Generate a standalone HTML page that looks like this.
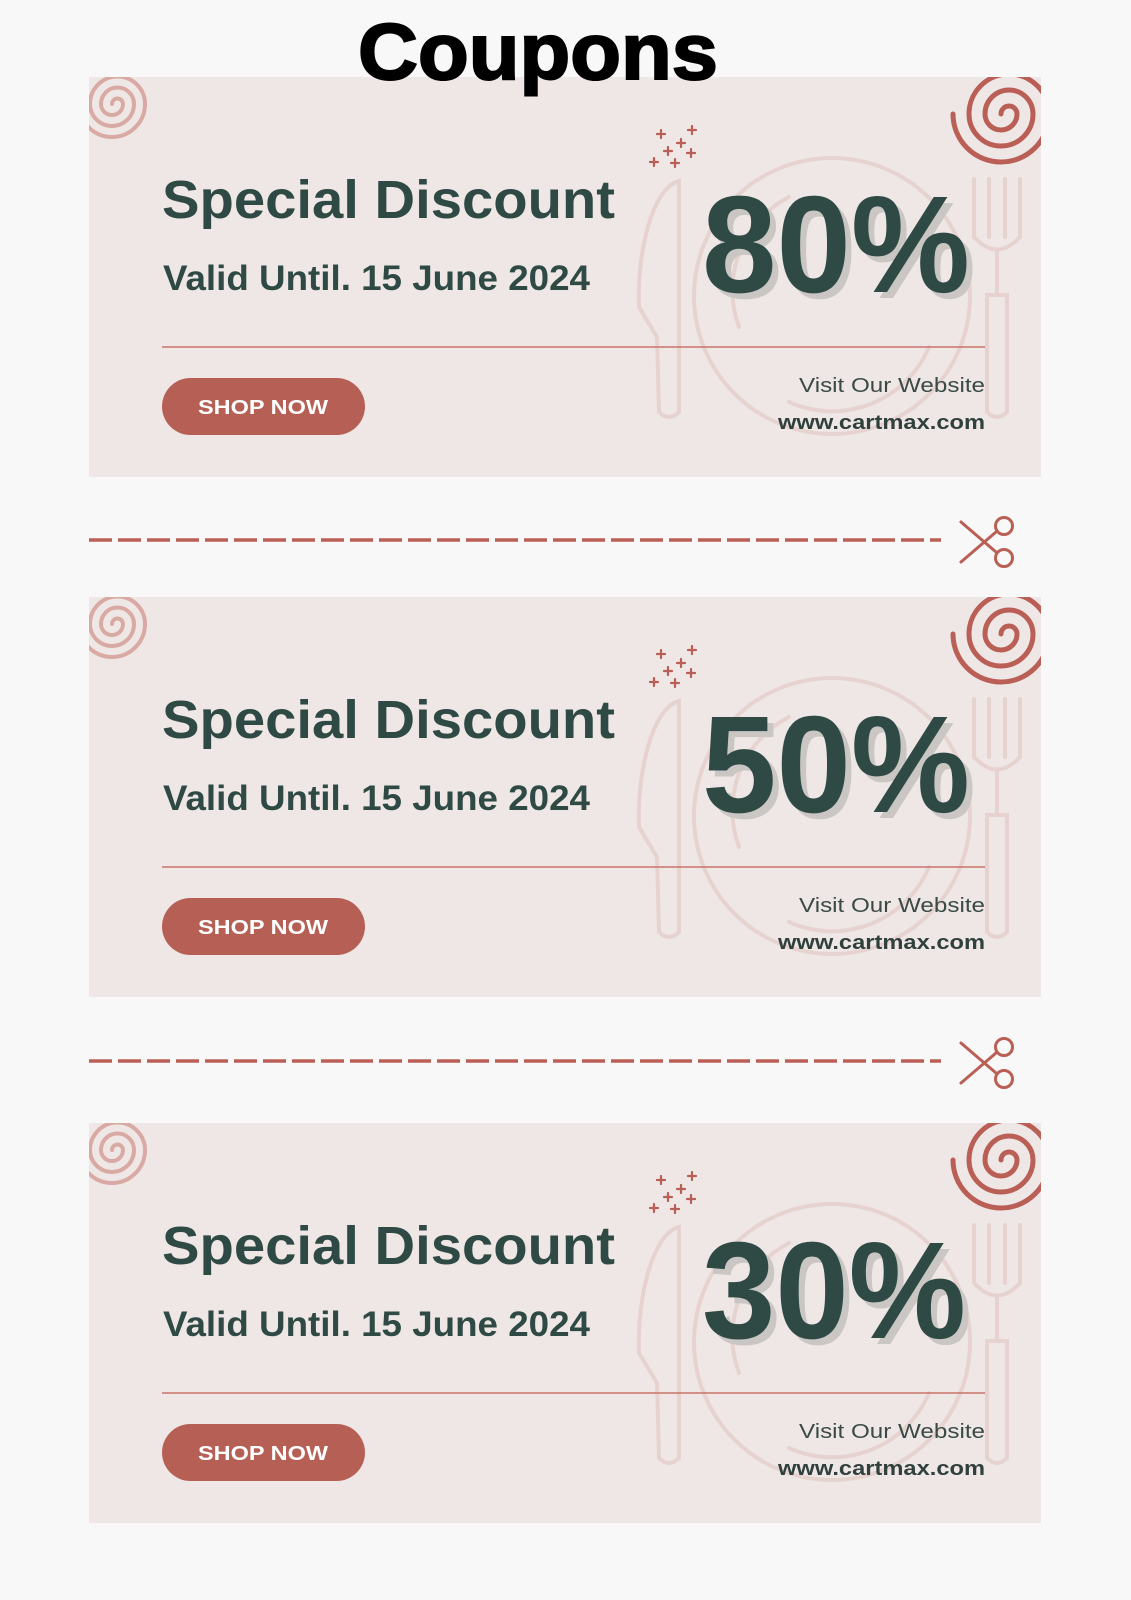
<!DOCTYPE html>
<html><head><meta charset="utf-8"><style>
html,body{margin:0;padding:0;background:#f8f8f8;width:1131px;height:1600px;overflow:hidden;font-family:"Liberation Sans",sans-serif}
.card{position:absolute;left:89px;width:952px;height:400px;background:#efe7e6;overflow:hidden}
.card svg{position:absolute;left:0;top:0}
</style></head><body>

<div class="card" style="top:77px">
<svg width="952" height="400" viewBox="0 0 952 400">
<g fill="none" stroke-linecap="round">
<path d="M23 27 a5.5 5.5 0 0 1 11 0 a11 11 0 0 1 -22 0 a16.5 16.5 0 0 1 33 0 a22 22 0 0 1 -44 0 a27.5 27.5 0 0 1 55 0 a33 33 0 0 1 -66 0" stroke="#d8aaa3" stroke-width="4"/>
<path d="M912 37 a8 8 0 0 1 16 0 a16 16 0 0 1 -32 0 a24 24 0 0 1 48 0 a32 32 0 0 1 -64 0 a40 40 0 0 1 80 0 a48 48 0 0 1 -96 0" stroke="#b95f55" stroke-width="5"/>
<circle cx="743" cy="219" r="138" stroke="#e6d3d0" stroke-width="4"/>
<path d="M650 250 A105 105 0 0 1 700 120" stroke="#e6d3d0" stroke-width="4"/>
<path d="M700 325 A105 105 0 0 0 840 270" stroke="#e6d3d0" stroke-width="4"/>
<path d="M590 104 C565 110 548 170 550 230 L568 260 L570 335 Q580 345 590 335 Z" stroke="#e6d3d0" stroke-width="4"/>
<path d="M885 102 L885 160 Q908 185 931 160 L931 102 M900 102 L900 160 M916 102 L916 160 M908 175 L908 218 M898 218 L918 218 L918 335 Q908 345 898 335 Z" stroke="#e6d3d0" stroke-width="4"/>
<g stroke="#b95f55" stroke-width="2.2">
<path d="M568 57h8M572 53v8 M599 53h8M603 49v8 M588 66h8M592 62v8 M575 74h8M579 70v8 M598 76h8M602 72v8 M561 85h8M565 81v8 M582 86h8M586 82v8"/>
</g>
</g>
<text x="73" y="141" font-family="Liberation Sans" font-weight="bold" font-size="54" textLength="453" lengthAdjust="spacingAndGlyphs" fill="#2f4a44">Special Discount</text>
<text x="74" y="213" font-family="Liberation Sans" font-weight="bold" font-size="35" textLength="427" lengthAdjust="spacingAndGlyphs" fill="#2f4a44">Valid Until. 15 June 2024</text>
<text x="619" y="221" font-family="Liberation Sans" font-weight="bold" font-size="138" textLength="268" lengthAdjust="spacingAndGlyphs" fill="#c9c6c3">80%</text>
<text x="613" y="215" font-family="Liberation Sans" font-weight="bold" font-size="138" textLength="268" lengthAdjust="spacingAndGlyphs" fill="#2f4a44">80%</text>
<line x1="73" y1="270" x2="896" y2="270" stroke="#c97468" stroke-width="1.5"/>
<rect x="73" y="301" width="203" height="57" rx="28.5" fill="#b55f55"/>
<text x="109" y="337" font-family="Liberation Sans" font-weight="bold" font-size="20" textLength="130" lengthAdjust="spacingAndGlyphs" fill="#fff">SHOP NOW</text>
<text x="710" y="315" font-family="Liberation Sans" font-size="20" textLength="186" lengthAdjust="spacingAndGlyphs" fill="#3a4a47">Visit Our Website</text>
<text x="689" y="352" font-family="Liberation Sans" font-weight="bold" font-size="20" textLength="207" lengthAdjust="spacingAndGlyphs" fill="#2f403d">www.cartmax.com</text>
</svg></div>

<div class="card" style="top:597px">
<svg width="952" height="400" viewBox="0 0 952 400">
<g fill="none" stroke-linecap="round">
<path d="M23 27 a5.5 5.5 0 0 1 11 0 a11 11 0 0 1 -22 0 a16.5 16.5 0 0 1 33 0 a22 22 0 0 1 -44 0 a27.5 27.5 0 0 1 55 0 a33 33 0 0 1 -66 0" stroke="#d8aaa3" stroke-width="4"/>
<path d="M912 37 a8 8 0 0 1 16 0 a16 16 0 0 1 -32 0 a24 24 0 0 1 48 0 a32 32 0 0 1 -64 0 a40 40 0 0 1 80 0 a48 48 0 0 1 -96 0" stroke="#b95f55" stroke-width="5"/>
<circle cx="743" cy="219" r="138" stroke="#e6d3d0" stroke-width="4"/>
<path d="M650 250 A105 105 0 0 1 700 120" stroke="#e6d3d0" stroke-width="4"/>
<path d="M700 325 A105 105 0 0 0 840 270" stroke="#e6d3d0" stroke-width="4"/>
<path d="M590 104 C565 110 548 170 550 230 L568 260 L570 335 Q580 345 590 335 Z" stroke="#e6d3d0" stroke-width="4"/>
<path d="M885 102 L885 160 Q908 185 931 160 L931 102 M900 102 L900 160 M916 102 L916 160 M908 175 L908 218 M898 218 L918 218 L918 335 Q908 345 898 335 Z" stroke="#e6d3d0" stroke-width="4"/>
<g stroke="#b95f55" stroke-width="2.2">
<path d="M568 57h8M572 53v8 M599 53h8M603 49v8 M588 66h8M592 62v8 M575 74h8M579 70v8 M598 76h8M602 72v8 M561 85h8M565 81v8 M582 86h8M586 82v8"/>
</g>
</g>
<text x="73" y="141" font-family="Liberation Sans" font-weight="bold" font-size="54" textLength="453" lengthAdjust="spacingAndGlyphs" fill="#2f4a44">Special Discount</text>
<text x="74" y="213" font-family="Liberation Sans" font-weight="bold" font-size="35" textLength="427" lengthAdjust="spacingAndGlyphs" fill="#2f4a44">Valid Until. 15 June 2024</text>
<text x="619" y="221" font-family="Liberation Sans" font-weight="bold" font-size="138" textLength="268" lengthAdjust="spacingAndGlyphs" fill="#c9c6c3">50%</text>
<text x="613" y="215" font-family="Liberation Sans" font-weight="bold" font-size="138" textLength="268" lengthAdjust="spacingAndGlyphs" fill="#2f4a44">50%</text>
<line x1="73" y1="270" x2="896" y2="270" stroke="#c97468" stroke-width="1.5"/>
<rect x="73" y="301" width="203" height="57" rx="28.5" fill="#b55f55"/>
<text x="109" y="337" font-family="Liberation Sans" font-weight="bold" font-size="20" textLength="130" lengthAdjust="spacingAndGlyphs" fill="#fff">SHOP NOW</text>
<text x="710" y="315" font-family="Liberation Sans" font-size="20" textLength="186" lengthAdjust="spacingAndGlyphs" fill="#3a4a47">Visit Our Website</text>
<text x="689" y="352" font-family="Liberation Sans" font-weight="bold" font-size="20" textLength="207" lengthAdjust="spacingAndGlyphs" fill="#2f403d">www.cartmax.com</text>
</svg></div>

<div class="card" style="top:1123px">
<svg width="952" height="400" viewBox="0 0 952 400">
<g fill="none" stroke-linecap="round">
<path d="M23 27 a5.5 5.5 0 0 1 11 0 a11 11 0 0 1 -22 0 a16.5 16.5 0 0 1 33 0 a22 22 0 0 1 -44 0 a27.5 27.5 0 0 1 55 0 a33 33 0 0 1 -66 0" stroke="#d8aaa3" stroke-width="4"/>
<path d="M912 37 a8 8 0 0 1 16 0 a16 16 0 0 1 -32 0 a24 24 0 0 1 48 0 a32 32 0 0 1 -64 0 a40 40 0 0 1 80 0 a48 48 0 0 1 -96 0" stroke="#b95f55" stroke-width="5"/>
<circle cx="743" cy="219" r="138" stroke="#e6d3d0" stroke-width="4"/>
<path d="M650 250 A105 105 0 0 1 700 120" stroke="#e6d3d0" stroke-width="4"/>
<path d="M700 325 A105 105 0 0 0 840 270" stroke="#e6d3d0" stroke-width="4"/>
<path d="M590 104 C565 110 548 170 550 230 L568 260 L570 335 Q580 345 590 335 Z" stroke="#e6d3d0" stroke-width="4"/>
<path d="M885 102 L885 160 Q908 185 931 160 L931 102 M900 102 L900 160 M916 102 L916 160 M908 175 L908 218 M898 218 L918 218 L918 335 Q908 345 898 335 Z" stroke="#e6d3d0" stroke-width="4"/>
<g stroke="#b95f55" stroke-width="2.2">
<path d="M568 57h8M572 53v8 M599 53h8M603 49v8 M588 66h8M592 62v8 M575 74h8M579 70v8 M598 76h8M602 72v8 M561 85h8M565 81v8 M582 86h8M586 82v8"/>
</g>
</g>
<text x="73" y="141" font-family="Liberation Sans" font-weight="bold" font-size="54" textLength="453" lengthAdjust="spacingAndGlyphs" fill="#2f4a44">Special Discount</text>
<text x="74" y="213" font-family="Liberation Sans" font-weight="bold" font-size="35" textLength="427" lengthAdjust="spacingAndGlyphs" fill="#2f4a44">Valid Until. 15 June 2024</text>
<text x="619" y="221" font-family="Liberation Sans" font-weight="bold" font-size="138" textLength="264" lengthAdjust="spacingAndGlyphs" fill="#c9c6c3">30%</text>
<text x="613" y="215" font-family="Liberation Sans" font-weight="bold" font-size="138" textLength="264" lengthAdjust="spacingAndGlyphs" fill="#2f4a44">30%</text>
<line x1="73" y1="270" x2="896" y2="270" stroke="#c97468" stroke-width="1.5"/>
<rect x="73" y="301" width="203" height="57" rx="28.5" fill="#b55f55"/>
<text x="109" y="337" font-family="Liberation Sans" font-weight="bold" font-size="20" textLength="130" lengthAdjust="spacingAndGlyphs" fill="#fff">SHOP NOW</text>
<text x="710" y="315" font-family="Liberation Sans" font-size="20" textLength="186" lengthAdjust="spacingAndGlyphs" fill="#3a4a47">Visit Our Website</text>
<text x="689" y="352" font-family="Liberation Sans" font-weight="bold" font-size="20" textLength="207" lengthAdjust="spacingAndGlyphs" fill="#2f403d">www.cartmax.com</text>
</svg></div>

<svg width="1131" height="1600" style="position:absolute;left:0;top:0;pointer-events:none;z-index:5" fill="none">
<text x="538" y="79" text-anchor="middle" font-family="Liberation Sans" font-weight="bold" font-size="80" textLength="360" lengthAdjust="spacingAndGlyphs" fill="#000" stroke="#000" stroke-width="2">Coupons</text>
<g stroke="#b95f55" stroke-width="3.5">
<line x1="89" y1="540" x2="941" y2="540" stroke-dasharray="23 6"/>
<line x1="89" y1="1061" x2="941" y2="1061" stroke-dasharray="23 6"/>
</g>
<g stroke="#b95f55" stroke-width="3" stroke-linecap="round">
<path d="M961 522 L996 552 M961 562 L996 532"/>
<circle cx="1004" cy="526" r="8.5"/>
<circle cx="1004" cy="558" r="8.5"/>
<path d="M961 1043 L996 1073 M961 1083 L996 1053"/>
<circle cx="1004" cy="1047" r="8.5"/>
<circle cx="1004" cy="1079" r="8.5"/>
</g>
</svg>
</body></html>
